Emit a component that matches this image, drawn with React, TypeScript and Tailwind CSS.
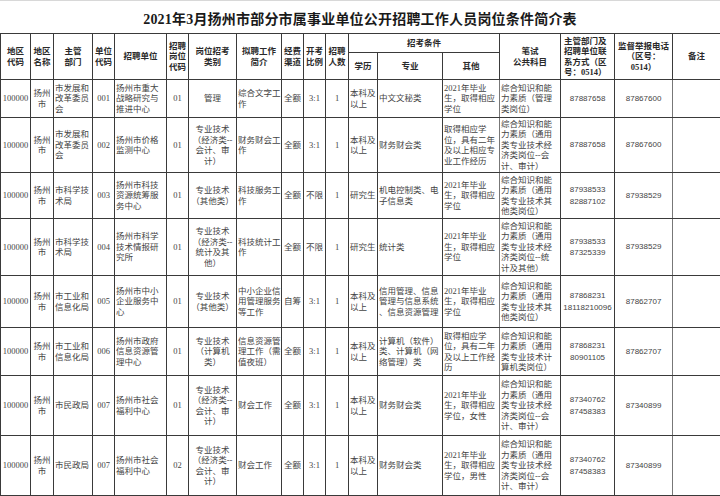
import React from 'react';

// 2021年3月扬州市部分市属事业单位公开招聘 — 岗位条件简介表

// 对齐方式：c = 居中, l = 左对齐
type Align = 'c' | 'l';

const ALIGN: Align[] = [
  'c', 'c', 'l', 'c', 'l', 'c', 'c', 'l', 'c', 'c', 'c', 'l', 'l', 'l', 'l', 'c', 'c', 'c',
];

// 每一格用 \n 表示原表中的换行
const ROWS: { h: string; cells: string[] }[] = [
  {
    h: 'h-[38px]',
    cells: [
      '100000', '扬州\n市', '市发展和\n改革委员\n会', '001', '扬州市重大\n战略研究与\n推进中心', '01', '管理',
      '综合文字工\n作', '全额', '3:1', '1', '本科及\n以上', '中文文秘类', '2021年毕业\n生，取得相应\n学位',
      '综合知识和能\n力素质（管理\n类岗位）', '87887658', '87867600', '',
    ],
  },
  {
    h: 'h-[55px]',
    cells: [
      '100000', '扬州\n市', '市发展和\n改革委员\n会', '002', '扬州市价格\n监测中心', '01', '专业技术\n（经济类--\n会计、审\n计）',
      '财务财会工\n作', '全额', '3:1', '1', '本科及\n以上', '财务财会类', '取得相应学\n位，具有二年\n及以上相应专\n业工作经历',
      '综合知识和能\n力素质（通用\n类专业技术经\n济类岗位--会\n计、审计）', '87887658', '87867600', '',
    ],
  },
  {
    h: 'h-[46px]',
    cells: [
      '100000', '扬州\n市', '市科学技\n术局', '003', '扬州市科技\n资源统筹服\n务中心', '01', '专业技术\n（其他类）',
      '科技服务工\n作', '全额', '不限', '1', '研究生', '机电控制类、电\n子信息类', '2021年毕业\n生，取得相应\n学位',
      '综合知识和能\n力素质（通用\n类专业技术其\n他类岗位）', '87938533\n82887102', '87938529', '',
    ],
  },
  {
    h: 'h-[57px]',
    cells: [
      '100000', '扬州\n市', '市科学技\n术局', '004', '扬州市科学\n技术情报研\n究所', '01', '专业技术\n（经济类--\n统计及其\n他）',
      '科技统计工\n作', '全额', '不限', '1', '研究生', '统计类', '2021年毕业\n生，取得相应\n学位',
      '综合知识和能\n力素质（通用\n类专业技术经\n济类岗位--统\n计及其他）', '87938533\n87325339', '87938529', '',
    ],
  },
  {
    h: 'h-[52px]',
    cells: [
      '100000', '扬州\n市', '市工业和\n信息化局', '005', '扬州市中小\n企业服务中\n心', '01', '专业技术\n（其他类）',
      '中小企业信\n用管理服务\n等工作', '自筹', '3:1', '1', '本科及\n以上', '信用管理、信息\n管理与信息系统\n、信息资源管理', '2021年毕业\n生，取得相应\n学位',
      '综合知识和能\n力素质（通用\n类专业技术其\n他类岗位）', '87868231\n18118210096', '87862707', '',
    ],
  },
  {
    h: 'h-[48px]',
    cells: [
      '100000', '扬州\n市', '市工业和\n信息化局', '006', '扬州市政府\n信息资源管\n理中心', '01', '专业技术\n（计算机\n类）',
      '信息资源管\n理工作（需\n值夜班）', '全额', '3:1', '1', '本科及\n以上', '计算机（软件）\n类、计算机（网\n络管理）类', '取得相应学\n位，具有二年\n及以上工作经\n历',
      '综合知识和能\n力素质（通用\n类专业技术计\n算机类岗位）', '87868231\n80901105', '87862707', '',
    ],
  },
  {
    h: 'h-[60px]',
    cells: [
      '100000', '扬州\n市', '市民政局', '007', '扬州市社会\n福利中心', '01', '专业技术\n（经济类--\n会计、审\n计）',
      '财会工作', '全额', '3:1', '1', '本科及\n以上', '财务财会类', '2021年毕业\n生，取得相应\n学位，女性',
      '综合知识和能\n力素质（通用\n类专业技术经\n济类岗位--会\n计、审计）', '87340762\n87458383', '87340899', '',
    ],
  },
  {
    h: 'h-[60px]',
    cells: [
      '100000', '扬州\n市', '市民政局', '007', '扬州市社会\n福利中心', '02', '专业技术\n（经济类--\n会计、审\n计）',
      '财会工作', '全额', '3:1', '1', '本科及\n以上', '财务财会类', '2021年毕业\n生，取得相应\n学位，男性',
      '综合知识和能\n力素质（通用\n类专业技术经\n济类岗位--会\n计、审计）', '87340762\n87458383', '87340899', '',
    ],
  },
];

// whitespace-pre：只按 \n 换行，不自动折行
const cellBase = 'border border-[#3a3a3a] align-middle whitespace-pre px-[1px] py-0';

function Th({
  children,
  rowSpan,
  colSpan,
}: {
  children: React.ReactNode;
  rowSpan?: number;
  colSpan?: number;
}) {
  return (
    <th
      rowSpan={rowSpan}
      colSpan={colSpan}
      className={`${cellBase} text-center font-bold text-[#2a2a2a]`}
    >
      {children}
    </th>
  );
}

export default function App() {
  return (
    <div className="w-[720px] h-[496px] overflow-hidden bg-white text-[#444] font-['Liberation_Serif','Noto_Sans_CJK_SC',serif]">
      {/* 标题 */}
      <div className="h-[33px] border-t border-[#d8d8d8] flex items-center justify-center pt-[4px]">
        <h1 className="text-[14px] font-bold tracking-[0.2px] text-[#1a1a1a]">
          2021年3月扬州市部分市属事业单位公开招聘工作人员岗位条件简介表
        </h1>
      </div>

      <table className="w-[720px] table-fixed border-collapse text-[8.5px] leading-[10.5px]">
        <colgroup>
          <col className="w-[30px]" />
          <col className="w-[23px]" />
          <col className="w-[39px]" />
          <col className="w-[22px]" />
          <col className="w-[52px]" />
          <col className="w-[22px]" />
          <col className="w-[48px]" />
          <col className="w-[45px]" />
          <col className="w-[22px]" />
          <col className="w-[22px]" />
          <col className="w-[23px]" />
          <col className="w-[29px]" />
          <col className="w-[65px]" />
          <col className="w-[57px]" />
          <col className="w-[61px]" />
          <col className="w-[54px]" />
          <col className="w-[58px]" />
          <col className="w-[48px]" />
        </colgroup>

        {/* 表头 */}
        <thead>
          <tr className="h-[19px]">
            <Th rowSpan={2}>{'地区\n代码'}</Th>
            <Th rowSpan={2}>{'地区\n名称'}</Th>
            <Th rowSpan={2}>{'主管\n部门'}</Th>
            <Th rowSpan={2}>{'单位\n代码'}</Th>
            <Th rowSpan={2}>招聘单位</Th>
            <Th rowSpan={2}>{'招聘\n岗位\n代码'}</Th>
            <Th rowSpan={2}>{'岗位招考\n类别'}</Th>
            <Th rowSpan={2}>{'拟聘工作\n简介'}</Th>
            <Th rowSpan={2}>{'经费\n渠道'}</Th>
            <Th rowSpan={2}>{'开考\n比例'}</Th>
            <Th rowSpan={2}>{'招聘\n人数'}</Th>
            <Th colSpan={3}>招考条件</Th>
            <Th rowSpan={2}>{'笔试\n公共科目'}</Th>
            <Th rowSpan={2}>
              <span className="block text-left pl-[2px]">
                {'主管部门及\n招聘单位联\n系方式（区\n号：0514）'}
              </span>
            </Th>
            <Th rowSpan={2}>{'监督举报电话\n（区号：\n0514）'}</Th>
            <Th rowSpan={2}>备注</Th>
          </tr>
          <tr className="h-[27px]">
            <Th>学历</Th>
            <Th>专业</Th>
            <Th>其他</Th>
          </tr>
        </thead>

        {/* 岗位数据 */}
        <tbody>
          {ROWS.map((row, i) => (
            <tr key={i} className={row.h}>
              {row.cells.map((text, j) => (
                <td
                  key={j}
                  className={`${cellBase} font-normal ${
                    ALIGN[j] === 'c' ? 'text-center' : 'text-left'
                  } ${j === 15 || j === 16 ? "font-['Liberation_Sans','Noto_Sans_CJK_SC',sans-serif] text-[8px] leading-[11.5px]" : ''} ${
                    j === 13 || j === 16 ? 'border-r-[#777]' : ''
                  }`}
                >
                  {text}
                </td>
              ))}
            </tr>
          ))}
        </tbody>
      </table>
    </div>
  );
}
